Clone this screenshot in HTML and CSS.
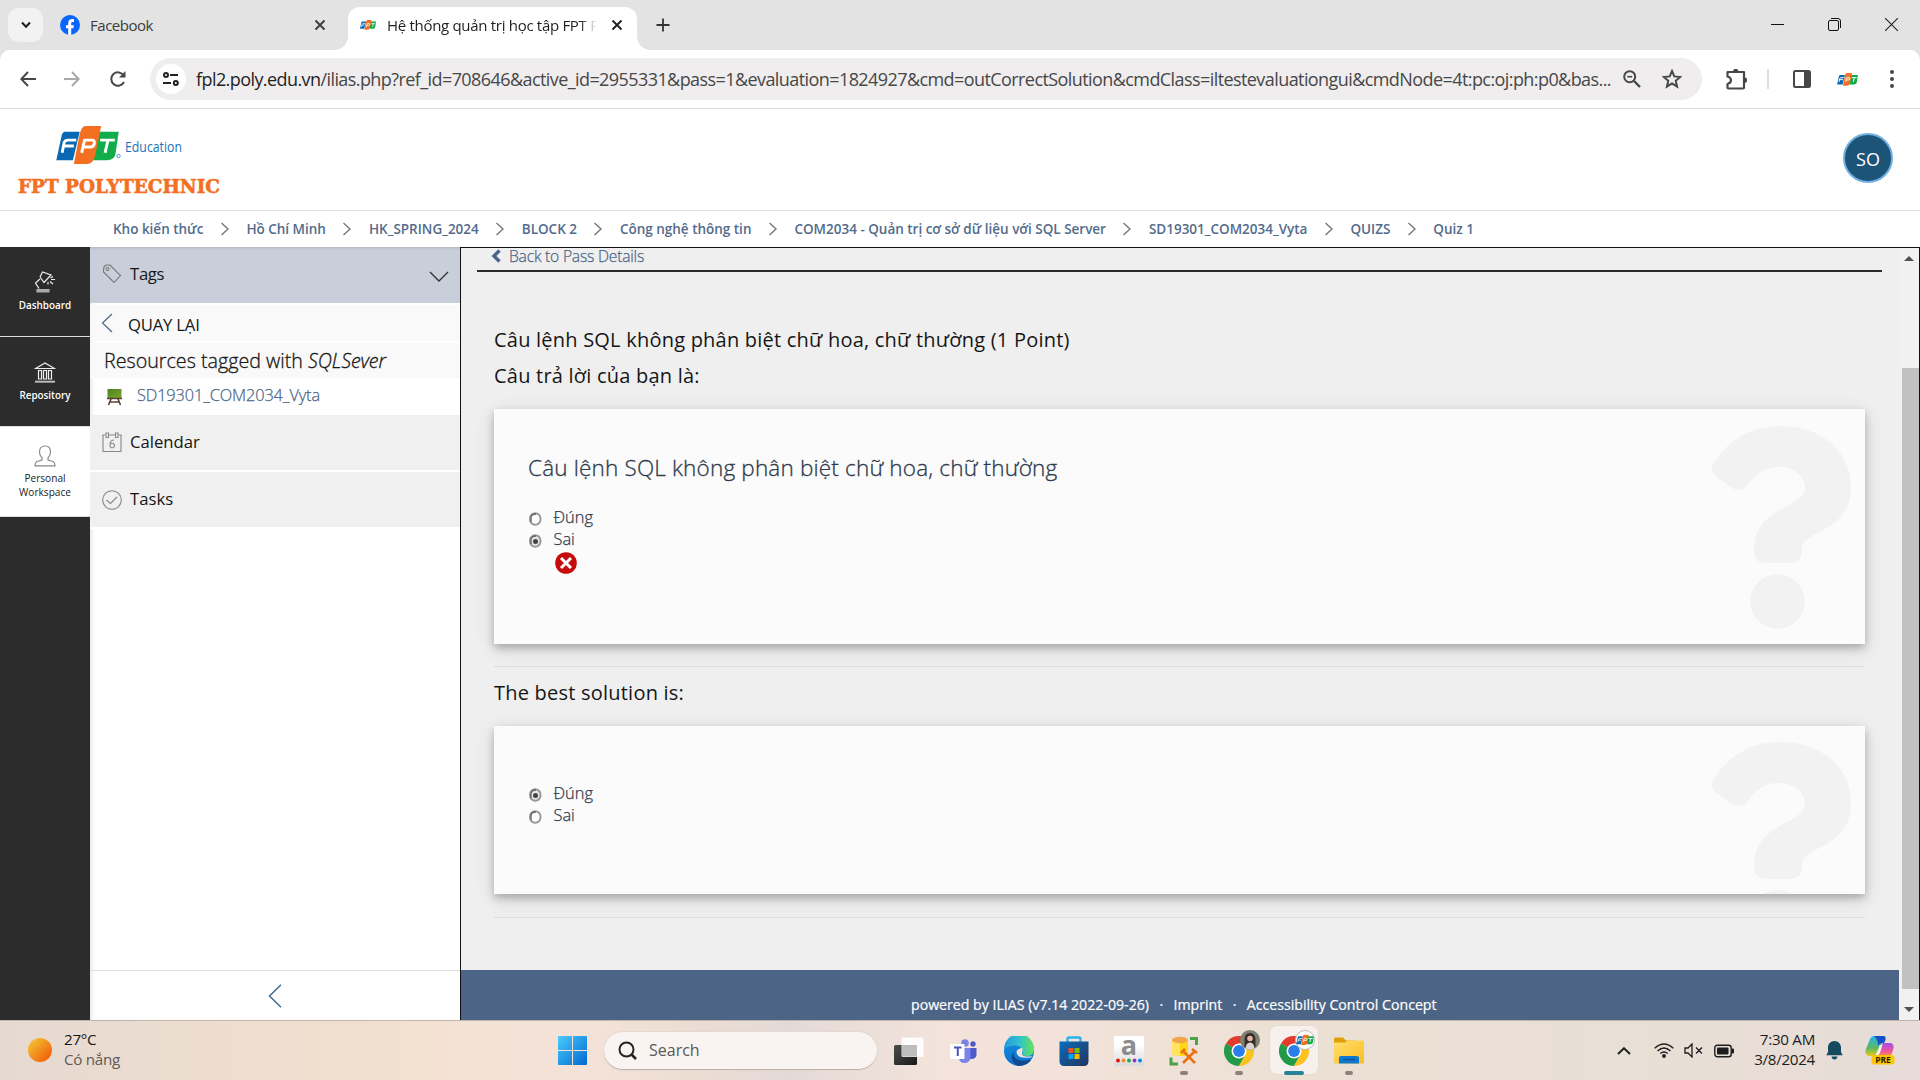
FILE: index.html
```html
<!DOCTYPE html>
<html lang="vi">
<head>
<meta charset="utf-8">
<title>Hệ thống quản trị học tập FPT Polytechnic</title>
<link rel="stylesheet" href="styles.css">
</head>
<body>
<svg class="defs" width="0" height="0">
  <defs>
    <linearGradient id="win" x1="0" y1="0" x2="1" y2="1"><stop offset="0" stop-color="#4bcbfb"/><stop offset="1" stop-color="#0069d0"/></linearGradient>
    <linearGradient id="sun" x1="0" y1="0" x2="1" y2="1"><stop offset=".1" stop-color="#f2c233"/><stop offset=".8" stop-color="#f2690d"/></linearGradient>
    <linearGradient id="edgeTop" x1="0" y1="0" x2="1" y2="0"><stop offset="0" stop-color="#2599dd"/><stop offset=".5" stop-color="#2fc1cf"/><stop offset="1" stop-color="#68e35a"/></linearGradient>
    <linearGradient id="edgeBody" x1="0" y1="0" x2="0" y2="1"><stop offset="0" stop-color="#1593dd"/><stop offset="1" stop-color="#0d6fd1"/></linearGradient>
    <linearGradient id="store" x1="0" y1="0" x2="1" y2="1"><stop offset="0" stop-color="#0b6dbd"/><stop offset="1" stop-color="#22345c"/></linearGradient>
    <linearGradient id="fold" x1="0" y1="0" x2="1" y2="1"><stop offset="0" stop-color="#ffdf6e"/><stop offset="1" stop-color="#fbbd22"/></linearGradient>
    <linearGradient id="dark" x1="0" y1="0" x2="1" y2="1"><stop offset="0" stop-color="#4c4c4a"/><stop offset="1" stop-color="#191919"/></linearGradient>
    <linearGradient id="grayA" x1="0" y1="0" x2="0" y2="1"><stop offset=".3" stop-color="#fff"/><stop offset="1" stop-color="#dadada"/></linearGradient>
    <linearGradient id="copL" x1="0" y1="0" x2="0" y2="1"><stop offset="0" stop-color="#22b5ee"/><stop offset=".6" stop-color="#5cb85f"/><stop offset="1" stop-color="#e8c81e"/></linearGradient>
    <linearGradient id="copR" x1="0" y1="0" x2="0" y2="1"><stop offset="0" stop-color="#a04fe6"/><stop offset=".6" stop-color="#ee55a0"/><stop offset="1" stop-color="#fb8a56"/></linearGradient>
    <linearGradient id="board" x1="0" y1="0" x2="1" y2="1"><stop offset="0" stop-color="#4d8127"/><stop offset="1" stop-color="#78a626"/></linearGradient>
    <symbol id="fpt" viewBox="0 0 64 40">
      <path d="M9 6H24L17 35H0L5 12Q6 6 9 6Z" fill="#0868b3"/>
      <path d="M41 6H64L61 27Q60 35 53 35H37Z" fill="#12ad4b"/>
      <path d="M30 0H46L40 30Q38 39 31 39H18L24 8Q26 0 30 0Z" fill="#f37022"/>
      <g fill="none" stroke="#fff" stroke-width="3"><path d="M6 27.500L8 17Q9 14.500 12 14.500H20.500M7.500 20.500H18"/><path d="M26 27.500L29 14.500H37Q39.500 14.500 39 18T35 21.500H28"/><path d="M45 14.500H60M53 14.500L50 27.500"/></g>
    </symbol>
    <symbol id="sep" viewBox="0 0 10 14"><path d="M1.500 1L8 7L1.500 13" fill="none" stroke="#777" stroke-width="1.400"/></symbol>
    <symbol id="x" viewBox="0 0 12 12"><path d="M1.500 1.500L10.500 10.500M10.500 1.500L1.500 10.500" stroke="currentColor" stroke-width="1.900"/></symbol>
    <symbol id="qmark" viewBox="0 0 139 203">
      <path d="M2 36C-1 41-1 46 4 51L20 62C26 65 30 65 35 60C43 49 51 41 66 41C83 41 93 51 93 61C93 84 42 79 42 124C42 132 46 137 53 137H79C86 137 90 132 90 125C87 103 139 109 139 61C139 25 109 0 69 0C37 0 18 14 2 36Z"/>
      <circle cx="65.500" cy="175.500" r="27.300"/>
    </symbol>
    <symbol id="radio-off" viewBox="0 0 13 14"><rect x="1" y="1.200" width="10.500" height="11.600" rx="5.200" fill="#fff" stroke="#989898" stroke-width="1.900"/><path d="M2 10V6Q2 2 7 2" fill="none" stroke="#666" stroke-width="1.300"/></symbol>
    <symbol id="radio-on" viewBox="0 0 13 14"><rect x="1" y="1.200" width="10.500" height="11.600" rx="5.200" fill="#e6e6e6" stroke="#989898" stroke-width="1.900"/><path d="M2 10V6Q2 2 7 2" fill="none" stroke="#666" stroke-width="1.300"/><circle cx="6.500" cy="7.400" r="2.500" fill="#444"/></symbol>
    <symbol id="chrome" viewBox="0 0 30 30">
      <path d="M15 15L2 7.500A15 15 0 0 1 28 7.500H15Z" fill="#e23b2e"/>
      <path d="M15 15L2 7.500A15 15 0 0 0 15 30L21.500 18.700Z" fill="#229a48"/>
      <path d="M15 7.500H28A15 15 0 0 1 15 30L21.500 18.700Z" fill="#fcc31c"/>
      <circle cx="15" cy="15" r="7.500" fill="#fff"/><circle cx="15" cy="15" r="5.900" fill="#2b7de9"/>
    </symbol>
  </defs>
</svg>

<div class="screen">
  <header class="tabstrip">
    <button class="tabsearch"><svg width="10" height="8" viewBox="0 0 10 8"><path d="M1 1.500L5 5.800L9 1.500" fill="none" stroke="#1f1f1f" stroke-width="2"/></svg></button>
    <div class="tab">
      <svg width="20" height="20" viewBox="0 0 20 20"><circle cx="10" cy="10" r="10" fill="#0866ff"/><path d="M8.200 19.800V13.200H6V10.200H8.200V8.600C8.200 5.500 9.800 4.100 12.300 4.100Q13.500 4.100 14 4.300V7H12.700C11.500 7 11.200 7.600 11.200 8.700V10.200H13.900L13.400 13.200H11.200V19.900Z" fill="#fff"/></svg>
      <span class="tab-title">Facebook</span>
      <svg class="close" width="12" height="12"><use href="#x"/></svg>
    </div>
    <div class="tab active">
      <svg width="16" height="10"><use href="#fpt"/></svg>
      <span class="tab-title faded">Hệ thống quản trị học tập FPT P</span>
      <svg class="close" width="12" height="12"><use href="#x"/></svg>
    </div>
    <svg class="newtab" width="14" height="14" viewBox="0 0 14 14"><path d="M7 .5V13.500M.5 7H13.500" stroke="#333" stroke-width="1.800"/></svg>
    <div class="winctl">
      <svg width="13" height="13" viewBox="0 0 13 13"><path d="M0 6.500H13" stroke="#111" stroke-width="1"/></svg>
      <svg width="13" height="13" viewBox="0 0 13 13"><g fill="none" stroke="#111"><rect x=".5" y="2.500" width="10" height="10" rx="1.500"/><path d="M3 .5H10Q12.500 .5 12.500 3V10"/></g></svg>
      <svg width="13" height="13" viewBox="0 0 13 13"><path d="M0 0L13 13M13 0L0 13" stroke="#222" stroke-width="1.100"/></svg>
    </div>
  </header>

  <div class="toolbar-wrap">
  <nav class="toolbar">
    <svg class="back" width="16" height="16" viewBox="0 0 16 16"><path d="M8 1L1.300 8L8 15M1.500 8H16" fill="none" stroke="#474747" stroke-width="2"/></svg>
    <svg class="fwd" width="16" height="16" viewBox="0 0 16 16"><path d="M8 1L14.700 8L8 15M14.500 8H0" fill="none" stroke="#a8a8a8" stroke-width="2"/></svg>
    <svg class="reload" width="16" height="16" viewBox="0 0 16 16"><path d="M14 11A6.700 6.700 0 1 1 13.700 4.500" fill="none" stroke="#474747" stroke-width="2"/><path d="M15.500 0V6.500H9Z" fill="#474747"/></svg>
    <div class="omnibox">
      <span class="siteinfo"><svg width="16" height="14" viewBox="0 0 16 14"><g fill="none" stroke="#222" stroke-width="2"><circle cx="3" cy="3" r="2"/><path d="M7 3H15M0 11H8"/><circle cx="12.800" cy="11" r="2"/></g></svg></span>
      <span class="url"><b>fpl2.poly.edu.vn</b>/ilias.php?ref_id=708646&amp;active_id=2955331&amp;pass=1&amp;evaluation=1824927&amp;cmd=outCorrectSolution&amp;cmdClass=iltestevaluationgui&amp;cmdNode=4t:pc:oj:ph:p0&amp;bas...</span>
      <svg class="zoomico" width="18" height="18" viewBox="0 0 18 18"><g fill="none" stroke="#474747" stroke-width="2"><circle cx="6.700" cy="6.700" r="5.500"/><path d="M11 11L17 17" stroke-width="2.400"/><path d="M4.200 6.700H9.200" stroke-width="1.600"/></g></svg>
      <svg width="20" height="20" viewBox="0 0 20 20"><path d="M10 2L12.300 7.400L18.200 8L13.700 11.800L15.100 17.600L10 14.500L4.900 17.600L6.300 11.800L1.800 8L7.700 7.400Z" fill="none" stroke="#474747" stroke-width="2"/></svg>
    </div>
    <svg class="ext" width="21" height="21" viewBox="0 0 21 21"><path d="M1.500 3H18V18.500Q18 19.500 17 19.500H2.500Q1.500 19.500 1.500 18.500V15Q5 14 5 11.300T1.500 7.500Z" fill="none" stroke="#474747" stroke-width="2.200" stroke-linejoin="round"/><path d="M7 2.500A2.700 2.700 0 0 1 12.400 2.500ZM18.500 8.500A2.700 2.700 0 0 1 18.500 13.900Z" fill="#474747"/></svg>
    <i class="vsep"></i>
    <svg class="panelico" width="18" height="18" viewBox="0 0 18 18"><rect x="1" y="1" width="16" height="16" rx="1.500" fill="none" stroke="#474747" stroke-width="2"/><path d="M11 1H17V17H11Z" fill="#474747"/></svg>
    <svg class="exticon" width="21" height="13"><use href="#fpt"/></svg>
    <svg class="dots" width="4" height="18" viewBox="0 0 4 18"><g fill="#474747"><circle cx="2" cy="2" r="2"/><circle cx="2" cy="9" r="2"/><circle cx="2" cy="16" r="2"/></g></svg>
  </nav>
  </div>

  <header class="sitehead">
    <svg class="logo" width="206" height="80" viewBox="16 124 206 80">
      <svg x="56" y="126" width="63" height="39"><use href="#fpt"/></svg>
      <circle cx="118.500" cy="156" r="1.700" fill="none" stroke="#4a9bd0" stroke-width="1"/>
      <text class="lg-edu" x="125" y="152" textLength="57" lengthAdjust="spacingAndGlyphs">Education</text>
      <text class="lg-poly" x="18" y="193.300" textLength="202" lengthAdjust="spacingAndGlyphs">FPT POLYTECHNIC</text>
    </svg>
    <span class="avatar">SO</span>
  </header>

  <nav class="crumbs">
    <a>Kho kiến thức</a><svg><use href="#sep"/></svg><a>Hồ Chí Minh</a><svg><use href="#sep"/></svg><a>HK_SPRING_2024</a><svg><use href="#sep"/></svg><a>BLOCK 2</a><svg><use href="#sep"/></svg><a>Công nghệ thông tin</a><svg><use href="#sep"/></svg><a>COM2034 - Quản trị cơ sở dữ liệu với SQL Server</a><svg><use href="#sep"/></svg><a>SD19301_COM2034_Vyta</a><svg><use href="#sep"/></svg><a>QUIZS</a><svg><use href="#sep"/></svg><a>Quiz 1</a>
  </nav>

  <div class="page">
    <aside class="mainbar">
      <div class="mb">
        <svg width="22" height="22" viewBox="0 0 22 22"><g fill="none" stroke="#eee" stroke-width="1.200"><path d="M3 18.500H15V21H3Z" fill="#aaa" stroke="#aaa"/><path d="M5 17.500L1.500 12L6 8M6 6L8.500 1L17 4L10 11.500L6 6"/><path d="M14 13.500V11M16 10.500L19 13M17 8.500H21M16.500 7L19 5.500"/></g></svg>
        <span>Dashboard</span>
      </div>
      <div class="mb">
        <svg width="22" height="22" viewBox="0 0 22 22"><g fill="none" stroke="#eee" stroke-width="1.200"><path d="M1.500 7.500L11 2L20.500 7.500Z"/><path d="M4.500 9.500H7.500V18H4.500ZM9.500 9.500H12.500V18H9.500ZM14.500 9.500H17.500V18H14.500Z"/><path d="M1 20.700H21" stroke-width="2" stroke="#bbb"/></g></svg>
        <span>Repository</span>
      </div>
      <div class="mb on">
        <svg width="22" height="22" viewBox="0 0 22 22"><path d="M11 1C7 1 5.500 3.500 5.500 7C5.500 10 6.500 11.500 8 13V15L3 16.500Q1 17.500 1 20.800H21Q21 17.500 19 16.500L14 15V13C15.500 11.500 16.500 10 16.500 7C16.500 3.500 15 1 11 1Z" fill="none" stroke="#888" stroke-width="1.200"/></svg>
        <span>Personal<br>Workspace</span>
      </div>
    </aside>

    <aside class="slate">
      <div class="row head">
        <svg width="20" height="20" viewBox="0 0 20 20"><g fill="none" stroke="#777" stroke-width="1.100"><path d="M1.500 6L2 3Q2.500 1.500 5 1L8 1L18.500 11.500L12 18.500L1.500 8Z"/><circle cx="5.500" cy="5" r="1.500"/></g></svg>
        <span class="tags">Tags</span>
        <svg class="caret" width="20" height="12" viewBox="0 0 20 12"><path d="M1 1L10 10L19 1" fill="none" stroke="#333" stroke-width="1.400"/></svg>
      </div>
      <div class="row backrow"><svg width="12" height="20" viewBox="0 0 12 20"><path d="M11 1L1.500 10L11 19" fill="none" stroke="#4c6586" stroke-width="1.200"/></svg><span>QUAY LẠI</span></div>
      <div class="row title">Resources tagged with&nbsp;<em>SQLSever</em></div>
      <div class="row item"><svg width="15" height="18" viewBox="0 0 15 18"><rect x=".5" y="1" width="14" height="9" fill="url(#board)"/><path d="M0 10.500H15M4 11L1.500 17M11 11L13.500 17M3 14H12" fill="none" stroke="#5b4035" stroke-width="1.600"/></svg><span>SD19301_COM2034_Vyta</span></div>
      <div class="row gray cal"><svg width="20" height="20" viewBox="0 0 20 20"><g fill="none" stroke="#888" stroke-width="1.100"><path d="M3.500 3H1V19.500H19V3H16.500M7 3H13"/><path d="M4 1H6.500V5.500H4ZM13.500 1H16V5.500H13.500Z"/><path d="M12 8Q8 8 8 13A2.300 2.300 0 1 0 8.500 12"/></g></svg><span>Calendar</span></div>
      <div class="row gray"><svg width="20" height="20" viewBox="0 0 20 20"><g fill="none" stroke="#888" stroke-width="1.100"><circle cx="10" cy="10" r="9.300"/><path d="M4.500 10L8.500 13.500L15 7"/></g></svg><span>Tasks</span></div>
      <div class="slatefoot"><svg width="14" height="24" viewBox="0 0 14 24"><path d="M13 .7L1.500 12L13 23.300" fill="none" stroke="#3f6891" stroke-width="1.500"/></svg></div>
    </aside>

    <main class="content">
      <div class="scrollarea">
        <div class="backlink"><svg width="10" height="14" viewBox="0 0 10 14"><path d="M8.500 1.500L3 7L8.500 12.500" fill="none" stroke="#4c6586" stroke-width="3.400"/></svg><span>Back to Pass Details</span></div>
        <h1>Câu lệnh SQL không phân biệt chữ hoa, chữ thường (1 Point)</h1>
        <h2>Câu trả lời của bạn là:</h2>
        <section class="card first">
          <h3>Câu lệnh SQL không phân biệt chữ hoa, chữ thường</h3>
          <div class="opt"><svg><use href="#radio-off"/></svg>Đúng</div>
          <div class="opt"><svg><use href="#radio-on"/></svg>Sai</div>
          <svg class="wrong" width="22" height="22" viewBox="0 0 22 22"><circle cx="11" cy="11" r="10.800" fill="#c60c0c"/><path d="M6 6L16 16M16 6L6 16" stroke="#fff" stroke-width="3"/></svg>
          <svg class="qm" width="139" height="203"><use href="#qmark"/></svg>
        </section>
        <hr>
        <h2 class="best">The best solution is:</h2>
        <section class="card second">
          <div class="opt"><svg><use href="#radio-on"/></svg>Đúng</div>
          <div class="opt"><svg><use href="#radio-off"/></svg>Sai</div>
          <svg class="qm" width="139" height="203"><use href="#qmark"/></svg>
        </section>
        <hr>
        <footer class="foot"><span>powered by ILIAS (v7.14 2022-09-26)</span><i>·</i><span>Imprint</span><i>·</i><span>Accessibility Control Concept</span></footer>
      </div>
      <div class="scrollbar">
        <svg width="10" height="5" viewBox="0 0 10 5"><path d="M5 0L10 5H0Z" fill="#505050"/></svg>
        <div class="track"><div class="thumb"></div></div>
        <svg width="10" height="5" viewBox="0 0 10 5"><path d="M5 5L10 0H0Z" fill="#505050"/></svg>
      </div>
    </main>
  </div>

  <footer class="taskbar">
    <div class="weather">
      <svg width="24" height="24" viewBox="0 0 24 24"><circle cx="12" cy="12" r="12" fill="url(#sun)"/></svg>
      <div class="wtext"><span class="deg">27°C</span><span class="cond">Có nắng</span></div>
    </div>
    <svg class="start" width="29" height="29" viewBox="0 0 29 29"><path d="M1 0H14V14H0V1Q0 0 1 0ZM15 0H28Q29 0 29 1V14H15ZM0 15H14V29H1Q0 29 0 28ZM15 15H29V28Q29 29 28 29H15Z" fill="url(#win)"/></svg>
    <div class="search"><svg width="19" height="19" viewBox="0 0 19 19"><g fill="none" stroke="#262626" stroke-width="2"><circle cx="8.500" cy="8.500" r="7"/><path d="M13 13L18 18" stroke-width="2.600"/></g></svg><span>Search</span></div>
    <div class="apps">
      <div class="app"><svg width="30" height="28" viewBox="0 0 30 28"><rect x="0" y="8" width="23" height="20" rx="1.500" fill="url(#dark)"/><rect x="7.500" y=".5" width="22" height="19.500" rx="1.500" fill="#fff" fill-opacity=".9"/><path d="M8 8H23V19.500H8Z" fill="#bdbdbd"/></svg></div>
      <div class="app"><svg width="28" height="24" viewBox="0 0 28 24"><circle cx="15" cy="4" r="3.800" fill="#7b83eb"/><circle cx="23" cy="5" r="2.700" fill="#5059c9"/><path d="M18 9H26.500V16Q26 20 21 20H18Z" fill="#5059c9"/><path d="M9 9H20.500V18Q20 24 14.500 24T9 18Z" fill="#7b83eb"/><rect x="0" y="5" width="14.500" height="15" rx="1" fill="#fff"/><path d="M4 8.500H11.500M7.750 8.500V17" stroke="#4b53bc" stroke-width="2" fill="none"/></svg></div>
      <div class="app"><svg width="30" height="30" viewBox="0 0 30 30"><circle cx="15" cy="15" r="15" fill="url(#edgeBody)"/><path d="M0 13A15 15 0 0 1 30 13C30 19 26 20.500 21 20Q18 19 18.500 16C19 12 15 9 10 9.500Q3 10 0 13Z" fill="url(#edgeTop)"/><path d="M11 14C6 22 15 27 27.500 23.500Q23 30 15 30C8 28 5 21 11 14Z" fill="#114a8b"/><path d="M18.500 12Q11 13 13 18T27 21.500L28 20Q24 21 20 20Q17 19 18.500 15Z" fill="#f1e3da"/></svg></div>
      <div class="app"><svg width="30" height="30" viewBox="0 0 30 30"><path d="M8.500 8V3Q8.500 1.500 10 1.500H20Q21.500 1.500 21.500 3V8" fill="none" stroke="#25b4ed" stroke-width="2.400"/><path d="M.5 5.500H29.500V25Q29.500 30 25 30H5Q.5 30 .5 25Z" fill="url(#store)"/><path d="M9.500 12H14.500V17H9.500Z" fill="#f05022"/><path d="M15.500 12H20.500V17H15.500Z" fill="#80b900"/><path d="M9.500 18H14.500V23H9.500Z" fill="#04a5f0"/><path d="M15.500 18H20.500V23H15.500Z" fill="#fdb900"/></svg></div>
      <div class="app"><svg class="lettered" width="30" height="30" viewBox="0 0 30 30"><rect width="30" height="30" fill="url(#grayA)"/><text class="biga" x="15" y="19" text-anchor="middle">a</text><circle cx="4" cy="24.500" r="1.900" fill="#e01010"/><circle cx="9.500" cy="24.500" r="1.900" fill="#f0902a"/><circle cx="15" cy="24.500" r="1.900" fill="#1ca653"/><circle cx="20.500" cy="24.500" r="1.900" fill="#9036c5"/><circle cx="26" cy="24.500" r="1.900" fill="#0b84e0"/></svg></div>
      <div class="app run"><svg width="30" height="30" viewBox="0 0 30 30"><path d="M3 4V17Q3 20 11 20T19 17V4Z" fill="#fdd617"/><path d="M3 4V17Q3 20 11 20V4Z" fill="#ffe361"/><ellipse cx="11" cy="4" rx="8" ry="3.200" fill="#efa64c"/><path d="M21 2.500H27.500V9M2 21.500V28H9" fill="none" stroke="#4aa24a" stroke-width="3"/><path d="M26 15L14 27M14 15L26 27M12 17L16 13M23 13L28 17" stroke="#ed7012" stroke-width="2.600" fill="none"/></svg></div>
      <div class="app run"><svg width="36" height="36" viewBox="0 0 36 36"><svg x="0" y="6" width="30" height="30"><use href="#chrome"/></svg><circle cx="26" cy="10" r="10" fill="#7b8272"/><path d="M20.500 17V9Q21 3 26 3T31.500 9V17Q26 21 20.500 17Z" fill="#3a2d29"/><circle cx="26" cy="8.500" r="2.800" fill="#dfb8a6"/><path d="M21.500 18.500Q22 12.500 26 12.500T30.500 18.500Q26 21 21.500 18.500Z" fill="#d9d4d2"/></svg></div>
      <div class="app run current"><svg width="36" height="36" viewBox="0 0 36 36"><svg x="0" y="6" width="30" height="30"><use href="#chrome"/></svg><circle cx="26" cy="10" r="9.500" fill="#fff" stroke="#bbb"/><svg x="17" y="4.500" width="18" height="11"><use href="#fpt"/></svg></svg></div>
      <div class="app run"><svg width="30" height="27" viewBox="0 0 30 27"><path d="M0 2Q0 .5 1.500 .5H9L12 3.500H20V12H0Z" fill="#e0a008"/><path d="M0 5.500H11L14 3.500H28.500Q30 3.500 30 5V25Q30 26.500 28.500 26.500H1.500Q0 26.500 0 25Z" fill="url(#fold)"/><path d="M5 26.500V21Q5 19 7 19H23Q25 19 25 21V26.500Z" fill="#0f78cf"/><path d="M9 22.500H21" stroke="#0b559d" stroke-width="1.500"/></svg></div>
    </div>
    <div class="tray">
      <svg width="14" height="8" viewBox="0 0 14 8"><path d="M1 7L7 1.200L13 7" fill="none" stroke="#1d1d1d" stroke-width="1.900"/></svg>
      <svg class="wifi" width="20" height="15" viewBox="0 0 20 15"><g fill="none" stroke="#1d1d1d" stroke-width="1.400"><path d="M.7 5.300Q10-3.500 19.300 5.300M3.500 8Q10 2 16.500 8M6.300 10.600Q10 7.300 13.700 10.600"/></g><circle cx="10" cy="13" r="1.900" fill="#1d1d1d"/></svg>
      <svg class="spk" width="20" height="15" viewBox="0 0 20 15"><path d="M1 5H4L8 1V14L4 10H1ZM12 4.500L18 10.500M18 4.500L12 10.500" fill="none" stroke="#1d1d1d" stroke-width="1.300"/></svg>
      <svg class="bat" width="20" height="14" viewBox="0 0 20 14"><rect x=".8" y="1.300" width="16.400" height="11.400" rx="2.500" fill="none" stroke="#1d1d1d" stroke-width="1.400"/><rect x="3" y="3.500" width="11.500" height="7" rx="1" fill="#1d1d1d"/><path d="M18 5V9H19.500V5Z" fill="#1d1d1d" stroke="#1d1d1d"/></svg>
      <div class="clock"><span>7:30 AM</span><span class="date">3/8/2024</span></div>
      <svg class="bell" width="17" height="19" viewBox="0 0 17 19"><path d="M8.500 0C4.500 0 2 3 2 6.500V11L.3 14.200H16.700L15 11V6.500C15 3 12.500 0 8.500 0ZM5.500 15.500Q6 18.500 8.500 18.500T11.500 15.500Z" fill="#154b5f"/></svg>
      <svg class="cop" width="30" height="29" viewBox="0 0 30 29"><path d="M9 0H20Q22 5 17 7Q14 14 12 20H3Q-1 18 1 13L5 3Q6.500 0 9 0Z" fill="url(#copL)"/><path d="M9 0H19Q21 1 20.500 4L19 7Q14 7 13 10Q13 3 9 0Z" fill="#1550c8"/><path d="M18 7H26Q30 9 28 14L26 20H12Q16 16 16.500 11Q17 8 18 7Z" fill="url(#copR)"/><path d="M10 20H13Q16 16 17.500 8L14.500 9.500Q13 14 10 20Z" fill="#fff" opacity=".8"/><rect x="6.500" y="19" width="23" height="9.500" rx="3" fill="#fcc703"/><text class="pre" x="18" y="26.500" text-anchor="middle">PRE</text></svg>
    </div>
  </footer>
</div>
</body>
</html>
```
FILE: styles.css
```css
* { box-sizing: border-box; }
body { margin: 0; font-family: "Open Sans", "Noto Sans", sans-serif; color: #161616; }
svg { display: block; flex: none; }
.defs { position: absolute; }
h1, h2, h3, hr { margin: 0; }
.screen { width: 1920px; height: 1080px; display: flex; flex-direction: column; overflow: hidden; background: #fff; white-space: nowrap; }

/* tab strip */
.tabstrip { height: 50px; flex: none; display: flex; background: #e3e3e3; padding: 7px 20px 0 8px; }
.tabsearch { width: 35px; height: 34px; margin-top: 1px; border: 0; border-radius: 11px; background: #f2f2f2; display: flex; align-items: center; justify-content: center; padding: 0; }
.tab { width: 305px; height: 43px; display: flex; align-items: center; padding: 0 22px 7px 17px; color: #3c3c3c; }
.tab-title { flex: 1; margin-left: 10px; font-size: 15px; line-height: 22px; letter-spacing: -.47px; }
.active { width: 289px; padding: 0 14px 7px 12px; background: #fff; border-radius: 12px 12px 0 0; color: #1f1f1f; position: relative; }
.active .tab-title { margin-left: 11px; margin-right: 12px; letter-spacing: -.3px; }
.faded { mask-image: linear-gradient(90deg, #000 91%, transparent 99%); }
.active::before, .active::after { content: ""; position: absolute; bottom: 0; width: 13px; height: 13px; }
.active::before { left: -13px; background: radial-gradient(circle at 0 0, transparent 12.5px, #fff 13px); }
.active::after { right: -13px; background: radial-gradient(circle at 100% 0, transparent 12.5px, #fff 13px); }
.newtab { margin: 11px 0 0 19px; }
.winctl { margin: 11px 0 0 auto; display: flex; gap: 44px; padding-right: 2px; }

/* toolbar */
.toolbar-wrap { flex: none; background: #e3e3e3; }
.toolbar { height: 59px; display: flex; align-items: center; padding: 0 25px 0 20px; border-bottom: 1px solid #dcdcdc; background: #fff; border-radius: 10px 10px 0 0; }
.fwd { margin-left: 28px; }
.reload { margin-left: 30px; }
.omnibox { width: 1552px; height: 42px; margin-left: 24px; border-radius: 21px; background: #efedee; display: flex; align-items: center; padding: 0 20px 0 6px; }
.siteinfo { width: 30px; height: 30px; border-radius: 50%; background: #fff; display: flex; align-items: center; justify-content: center; }
.url { margin-left: 10px; width: 1427px; font-size: 18px; line-height: 28px; letter-spacing: -.578px; color: #474747; }
.url b { font-weight: 400; color: #1f1f1f; }
.omnibox svg + svg { margin-left: 21px; }
.ext { margin-left: 24px; }
.vsep { width: 2px; height: 20px; background: #dedede; margin-left: 20px; }
.panelico { margin-left: 24px; }
.exticon { margin-left: 26px; }
.dots { margin-left: 32px; }

/* site header */
.sitehead { height: 102px; flex: none; display: flex; justify-content: space-between; padding: 15px 27px 0 16px; border-bottom: 1px solid #ddd; }
.logo, .lettered { overflow: visible; }
.lg-edu { font-size: 14.5px; fill: #1d72b8; }
.lg-poly { font: bold 19px "DejaVu Serif", serif; fill: #f37022; stroke: #f37022; stroke-width: .6px; }
.avatar { width: 50px; height: 50px; margin-top: 9px; border-radius: 50%; border: 2px solid #71afe0; background: #1c5478; color: #fff; font-size: 18px; line-height: 48px; text-align: center; }

/* breadcrumb */
.crumbs { height: 36px; flex: none; display: flex; align-items: center; gap: 16.5px; padding: 0 0 0 113px; font-size: 13.5px; font-weight: 600; line-height: 20px; color: #536b8b; letter-spacing: -.01px; }
.crumbs svg { width: 10px; height: 14px; margin-top: -1px; }

.page { height: 773px; flex: none; display: flex; }
.mainbar { width: 90px; background: #2c2c2c; }
.mb { height: 90px; border-bottom: 1px solid #ddd; display: flex; flex-direction: column; align-items: center; padding-top: 24px; color: #fff; font-size: 9.9px; font-weight: 600; line-height: 14px; text-align: center; }
.mb span { margin-top: 5px; }
.on { background: #fff; color: #222; font-weight: 400; padding-top: 18px; font-size: 10.1px; }
.on span { margin-top: 4px; }

/* tool slate */
.slate { width: 370px; background: #fff; display: flex; flex-direction: column; box-shadow: inset 5px 0 5px -4px #0002; font-size: 16.7px; }
.row { display: flex; align-items: center; padding-left: 12px; flex: none; }
.head { height: 56px; background: #c9cfda; margin-bottom: 2px; padding-bottom: 2px; box-shadow: inset 0 3px 3px -2px #0002; }
.head span, .gray span { margin: -1px 0 0 8px; }
.tags { letter-spacing: -.3px; }
.caret { margin: 5px 11px 0 auto; }
.backrow { height: 36px; background: #f9f9f9; padding-left: 11px; font-weight: 400; margin-bottom: 2px; }
.backrow svg { margin-top: -1px; }
.backrow span { margin: 3px 0 0 15px; letter-spacing: -.2px; }
.title { height: 35px; background: #f9f9f9; font-size: 19.7px; padding: 0 0 1px 14px; font-weight: 300; -webkit-text-stroke: .3px #161616; }
.title em { letter-spacing: -.15px; }
.item { height: 37px; padding: 0 0 3px 17px; color: #4c6586; font-weight: 300; -webkit-text-stroke: .25px #4c6586; font-size: 16.3px; letter-spacing: -.1px; }
.item svg { margin-top: 3px; }
.item span { margin-left: 15px; }
.gray { height: 57px; background: #f0f0f0; border-bottom: 2px solid #fff; }
.gray span { margin-top: -3px; }
.cal { padding-bottom: 1px; }
.cal span { margin-top: -2px; }
.slatefoot { margin-top: auto; height: 50px; border-top: 1px solid #ddd; display: flex; align-items: center; justify-content: center; }

/* content */
.content { width: 1460px; display: flex; background: #efefef; border: 1px solid #111; border-bottom: 0; }
.scrollarea { width: 1438px; display: flex; flex-direction: column; }
.backlink { height: 24px; width: 1405px; margin-left: 16px; padding: 0 0 6px 14px; border-bottom: 2px solid #2c2c2c; display: flex; align-items: center; gap: 8px; color: #4c6586; font-size: 15.6px; font-weight: 300; -webkit-text-stroke: .25px #4c6586; letter-spacing: -.19px; line-height: 16px; }
h1, h2 { font-size: 20px; font-weight: 400; line-height: 36px; letter-spacing: .22px; margin-left: 33px; color: #161616; }
h1 { margin-top: 50px; }
.card { width: 1371px; margin-left: 33px; background: #fbfbfb; box-shadow: 0 4px 8px #0000003d, 0 5px 20px #0000001c; padding-left: 34px; position: relative; color: #2c3a4c; }
.first { height: 235px; margin-top: 15px; padding-top: 43px; }
h3 { font-size: 22.5px; font-weight: 300; -webkit-text-stroke: .3px #2c3a4c; line-height: 32px; letter-spacing: .18px; }
.opt { display: flex; align-items: flex-start; height: 22px; font-size: 16.4px; line-height: 22px; font-weight: 300; -webkit-text-stroke: .25px #2c3a4c; }
.opt svg { width: 13px; height: 14px; margin: 6px 11.5px 0 1px; }
h3 + .opt { margin-top: 22px; }
.wrong { margin: 2px 0 0 27px; }
.qm { position: absolute; right: 14px; top: 17px; fill: #f2f2f2; }
.second .qm { top: 16px; clip-path: inset(0 0 51px 0); }
hr { width: 1371px; margin: 22px 0 0 33px; border: 0; border-top: 1px solid #ddd; flex: none; }
.best { margin-top: 8px; }
.second { height: 168px; margin-top: 15px; padding-top: 56px; }
.second + hr { margin-top: 23px; }
.foot { margin-top: auto; height: 50px; background: #4c6586; display: flex; padding: 23px 0 0 450px; color: #fff; font-size: 14.15px; line-height: 24px; -webkit-text-stroke: .2px #fff; }
.foot i { width: 24.5px; text-align: center; font-style: normal; }
.scrollbar { width: 20px; background: #f1f1f1; display: flex; flex-direction: column; align-items: center; padding: 8px 0; }
.track { flex: 1; width: 17px; margin-left: 2px; padding-top: 107px; }
.thumb { height: 621px; background: #c1c1c1; }

/* taskbar */
.taskbar { height: 60px; flex: none; display: flex; align-items: center; border-top: 1px solid #c3b4ab; padding: 0 25px 0 28px;
  background: linear-gradient(90deg, #e6d9d0 0%, #efdfd0 15%, #f2e0ce 20%, #f5e2d7 25%, #f4e2d8 31%, #ecddd3 36%, #e3dad8 41%, #f3e3da 49%, #f2e2d9 56%, #ebe0d4 70%, #e8dfd5 85%, #e7dcd8 100%); }
.weather { display: flex; width: 530px; align-items: center; gap: 12px; }
.wtext, .clock { display: flex; flex-direction: column; font-size: 15.2px; line-height: 20px; letter-spacing: -.3px; margin-top: -4px; }
.weather > svg { margin-top: -1px; }
.cond { color: #5f5a55; }
.search { width: 273px; height: 38px; margin-left: 17px; border-radius: 19px; background: #f9f4f1; border-bottom: 1px solid #bcb2ad; box-shadow: 0 0 0 1px #e4d8d0; display: flex; align-items: center; gap: 12px; padding-left: 14px; font-size: 16px; color: #5b5856; }
.apps { display: flex; margin-left: 4px; height: 59px; align-items: center; }
.app { width: 55px; height: 59px; display: flex; align-items: center; justify-content: center; position: relative; }
.run::after { content: ""; position: absolute; bottom: 5px; left: 23.5px; width: 8px; height: 4px; border-radius: 2px; background: #8a817c; }
.current::after { left: 17.5px; width: 20px; background: #28839a; }
.current::before { content: ""; position: absolute; left: 3.5px; top: 5px; width: 48px; height: 48px; border-radius: 6px; background: #f7f0ec; box-shadow: 0 0 1px #bbb; }
.current svg { position: relative; }
.app > svg[width="36"] { margin: -6px 0 0 6px; }
.biga { font: bold 27px "Open Sans", sans-serif; fill: #8c8c8c; }
.tray { margin-left: auto; display: flex; align-items: center; height: 59px; }
.wifi { margin-left: 23px; }
.spk { margin-left: 10px; }
.bat { margin-left: 10px; }
.clock { width: 70px; margin-left: 11px; text-align: right; align-items: flex-end; color: #1d1d1d; }
.bell { margin-left: 11px; }
.cop { margin-left: 22px; }
.pre { font: bold 8.5px "Open Sans", sans-serif; fill: #2b2300; }
```
